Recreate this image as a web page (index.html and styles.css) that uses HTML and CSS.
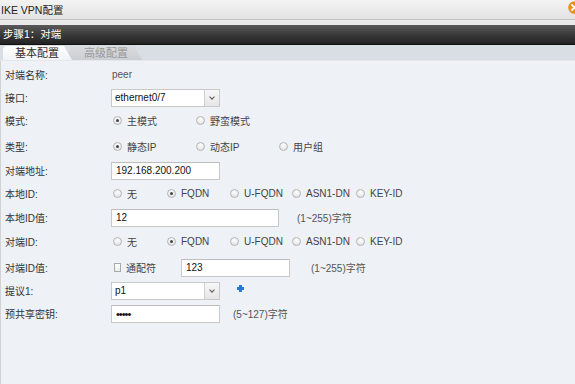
FILE: index.html
```html
<!DOCTYPE html>
<html lang="zh-CN">
<head>
  <meta charset="UTF-8" />
  <title>IKE VPN配置</title>
  <link rel="stylesheet" href="styles.css">
</head>
<body>
  <div class="dialog">
    <div class="titlebar">
      <span class="title">IKE VPN配置</span>
      <svg class="close" width="13" height="13" viewBox="0 0 13 13">
        <circle cx="6.5" cy="6.5" r="6.3" fill="#ea8f1c"/>
        <path d="M4 4 L9 9 M9 4 L4 9" stroke="#fff" stroke-width="1.8" stroke-linecap="round"/>
      </svg>
    </div>
    <div class="gap"></div>
    <div class="step">步骤1：对端</div>
    <div class="tabs">
      <span class="tab active">基本配置</span>
      <span class="tab">高级配置</span>
    </div>

    <div class="form">
      <div class="row">
        <span class="label">对端名称:</span>
        <span class="value">peer</span>
      </div>
      <div class="row">
        <span class="label">接口:</span>
        <div class="select"><span class="select-text">ethernet0/7</span><span class="select-btn"></span></div>
      </div>
      <div class="row">
        <span class="label">模式:</span>
        <div class="options mode">
          <span class="opt"><i class="radio on"></i>主模式</span>
          <span class="opt"><i class="radio"></i>野蛮模式</span>
        </div>
      </div>
      <div class="row loose">
        <span class="label">类型:</span>
        <div class="options mode">
          <span class="opt"><i class="radio on"></i>静态IP</span>
          <span class="opt"><i class="radio"></i>动态IP</span>
          <span class="opt"><i class="radio"></i>用户组</span>
        </div>
      </div>
      <div class="row mid">
        <span class="label">对端地址:</span>
        <input class="text w-short" type="text" value="192.168.200.200">
      </div>
      <div class="row">
        <span class="label">本地ID:</span>
        <div class="options ids">
          <span class="opt"><i class="radio"></i>无</span>
          <span class="opt"><i class="radio on"></i>FQDN</span>
          <span class="opt"><i class="radio"></i>U-FQDN</span>
          <span class="opt"><i class="radio"></i>ASN1-DN</span>
          <span class="opt"><i class="radio"></i>KEY-ID</span>
        </div>
      </div>
      <div class="row mid">
        <span class="label">本地ID值:</span>
        <input class="text w-long" type="text" value="12">
        <span class="hint hint-a">(1~255)字符</span>
      </div>
      <div class="row mid">
        <span class="label">对端ID:</span>
        <div class="options ids">
          <span class="opt"><i class="radio"></i>无</span>
          <span class="opt"><i class="radio on"></i>FQDN</span>
          <span class="opt"><i class="radio"></i>U-FQDN</span>
          <span class="opt"><i class="radio"></i>ASN1-DN</span>
          <span class="opt"><i class="radio"></i>KEY-ID</span>
        </div>
      </div>
      <div class="row loose">
        <span class="label">对端ID值:</span>
        <span class="opt wild"><i class="check"></i>通配符</span>
        <input class="text w-peer" type="text" value="123">
        <span class="hint hint-b">(1~255)字符</span>
      </div>
      <div class="row">
        <span class="label">提议1:</span>
        <div class="select"><span class="select-text">p1</span><span class="select-btn"></span></div>
        <span class="plus"></span>
      </div>
      <div class="row">
        <span class="label">预共享密钥:</span>
        <input class="text w-short pass" type="password" value="12345">
        <span class="hint hint-c">(5~127)字符</span>
      </div>
    </div>
  </div>
</body>
</html>
```

FILE: styles.css
```css
* {
  box-sizing: border-box;
}
html, body {
  margin: 0;
  height: 100%;
}
body {
  font-family: "Liberation Sans", "Noto Sans CJK SC", sans-serif;
  font-size: 10px;
  color: #333;
  background: #eef1f6;
  overflow: hidden;
}
.dialog {
  display: flex;
  flex-direction: column;
  height: 384px;
}
.titlebar {
  height: 20px;
  display: flex;
  align-items: center;
  justify-content: space-between;
  padding-left: 1px;
  background: linear-gradient(#f3f3f3, #e3e3e3);
  border-bottom: 1px solid #c4c4c4;
  overflow: hidden;
  color: #222;
}
.title {
  font-size: 10.5px;
}
.close {
  flex-shrink: 0;
  margin-right: -6px;
  margin-top: -4px;
}
.gap {
  height: 5px;
  background: #e9e9e9;
}
.step {
  height: 20px;
  line-height: 19px;
  padding-left: 3px;
  color: #fff;
  font-size: 10.5px;
  background: linear-gradient(#5a5a5a, #3a3a3a 50%, #232323);
  border-bottom: 1px solid #111;
}
.tabs {
  height: 16px;
  display: flex;
  align-items: flex-end;
  padding-left: 3px;
  background: #d9dde4;
  border-bottom: 1px solid #e4e7ec;
}
.tab {
  height: 14px;
  line-height: 14px;
  padding: 0 14px 0 20px;
  margin-right: -8px;
  color: #9a9a9a;
  font-size: 11px;
  background: linear-gradient(#d9dbde, #cbced3);
  border-radius: 4px 8px 0 0;
  clip-path: polygon(8px 0, calc(100% - 8px) 0, 100% 100%, 0 100%);
}
.tab.active {
  position: relative;
  z-index: 1;
  padding: 0 13px 0 12px;
  color: #3a2a2a;
  background: linear-gradient(#ffffff, #f1f3f6);
  clip-path: polygon(0 0, calc(100% - 8px) 0, 100% 100%, 0 100%);
}
.form {
  flex: 1;
  padding-top: 2px;
  border-left: 1px solid #d2d2d2;
}
.row {
  height: 23px;
  display: flex;
  align-items: center;
  padding-left: 4px;
}
.row.loose {
  margin-top: 3px;
}
.row.mid {
  margin-top: 1px;
}
.label {
  width: 106px;
  flex-shrink: 0;
  color: #333;
}
.value {
  padding-left: 1px;
  color: #555;
}
.text {
  height: 18px;
  padding: 0 4px;
  border: 1px solid #c9c9c9;
  border-top-color: #bdbdbd;
  background: #fff;
  font-family: "Liberation Sans", sans-serif;
  font-size: 10px;
  color: #111;
  outline: none;
}
.w-short {
  width: 109px;
}
.w-long {
  width: 168px;
}
.w-peer {
  width: 109px;
  margin-left: 25px;
}
.pass {
  font-size: 11px;
  letter-spacing: -1px;
}
.select {
  width: 109px;
  height: 18px;
  display: flex;
  border: 1px solid #c9c9c9;
  background: #fff;
}
.select-text {
  flex: 1;
  line-height: 16px;
  padding-left: 3px;
  color: #111;
}
.select-btn {
  width: 15px;
  border-left: 1px solid #d0d0d0;
  background: linear-gradient(#f7f7f7, #e6e6e6);
  position: relative;
}
.select-btn::after {
  content: "";
  position: absolute;
  left: 5px;
  top: 5px;
  width: 3px;
  height: 3px;
  border-right: 1.3px solid #555;
  border-bottom: 1.3px solid #555;
  transform: rotate(45deg);
}
.options {
  display: grid;
}
.options.mode {
  grid-template-columns: 83px 83px auto;
}
.options.ids {
  grid-template-columns: 54px 63px 62px 64px auto;
}
.opt {
  display: flex;
  align-items: center;
  white-space: nowrap;
  color: #444;
  padding-left: 2px;
}
.radio {
  width: 9px;
  height: 9px;
  margin-right: 5px;
  border: 1px solid #b5b5b5;
  border-radius: 50%;
  background: radial-gradient(circle at 50% 30%, #ffffff, #dcdcdc);
  position: relative;
}
.radio.on::after {
  content: "";
  position: absolute;
  left: 2px;
  top: 2px;
  width: 3px;
  height: 3px;
  border-radius: 50%;
  background: #444;
}
.check {
  width: 9px;
  height: 9px;
  margin-right: 5px;
  border: 1px solid #aaa;
  background: linear-gradient(#fff, #ececec);
}
.wild {
  width: 45px;
  padding-left: 3px;
}
.hint {
  color: #555;
}
.hint-a {
  margin-left: 18px;
}
.hint-b {
  margin-left: 21px;
}
.hint-c {
  margin-left: 13px;
}
.plus {
  width: 7px;
  height: 7px;
  margin-left: 17px;
  margin-top: -4px;
  position: relative;
}
.plus::before,
.plus::after {
  content: "";
  position: absolute;
  background: #2a78d2;
}
.plus::before {
  left: 2px;
  top: 0;
  width: 3px;
  height: 7px;
}
.plus::after {
  left: 0;
  top: 2px;
  width: 7px;
  height: 3px;
}
```
